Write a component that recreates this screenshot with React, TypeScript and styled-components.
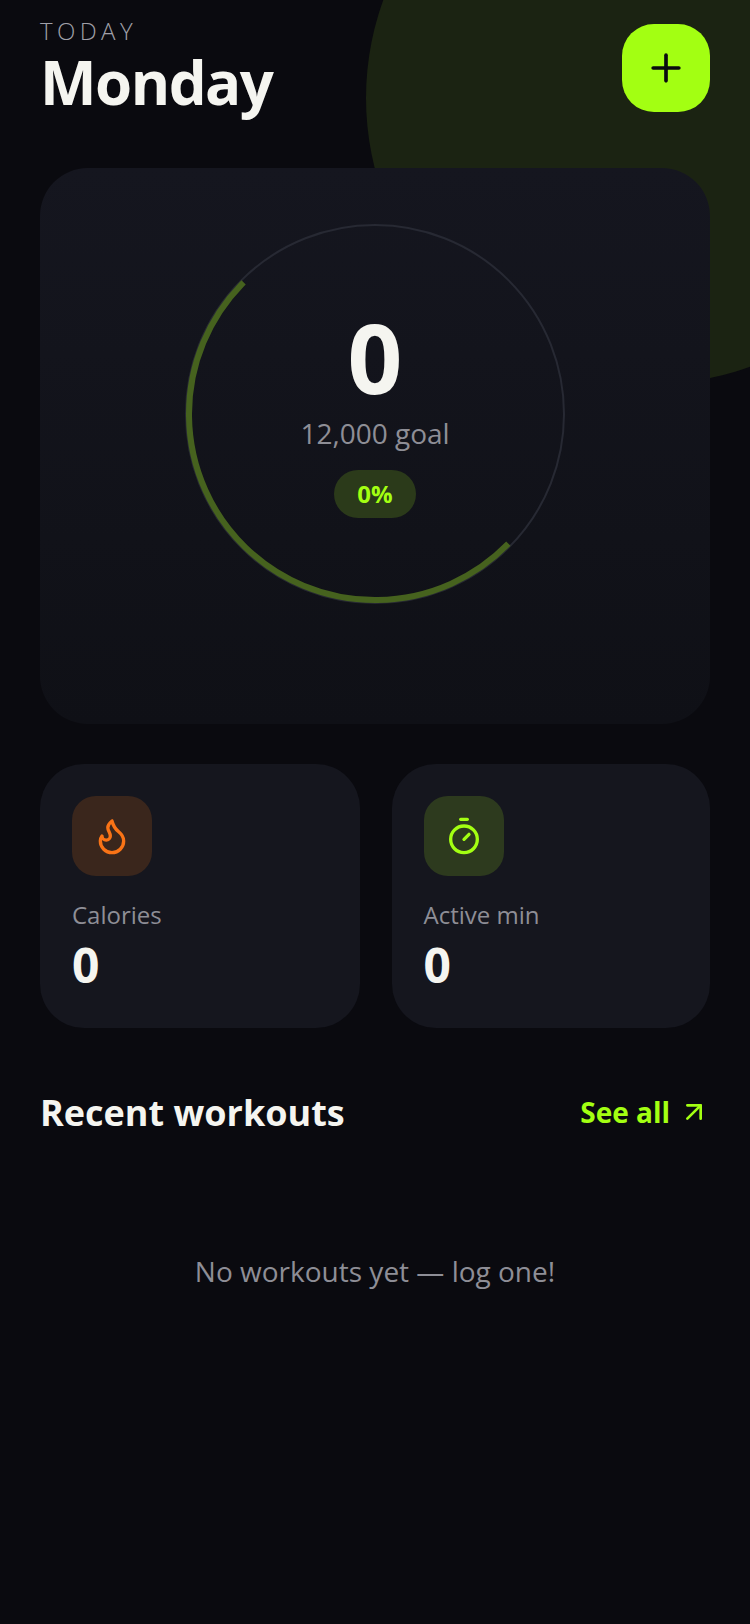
import React from "react";
import styled, { createGlobalStyle } from "styled-components";
import { ArrowUpRight, Flame, Plus, Timer } from "lucide-react";

const GlobalStyle = createGlobalStyle`
  html, body {
    margin: 0;
    padding: 0;
    background: #0a0a0f;
  }
  * {
    box-sizing: border-box;
  }
`;

const Screen = styled.div`
  position: relative;
  width: 750px;
  height: 1624px;
  overflow: hidden;
  padding: 0 40px;
  background: #0a0a0f;
  font-family: "Open Sans", sans-serif;
  color: #f5f5f0;
`;

// Decorative lime circle behind the header
const Glow = styled.div`
  position: absolute;
  top: -188px;
  left: 366px;
  width: 572px;
  height: 572px;
  border-radius: 50%;
  background: #1b2312;
`;

const Header = styled.header`
  position: relative;
  display: flex;
  justify-content: space-between;
  align-items: flex-start;
  height: 168px;
  padding-top: 16px;
`;

const Eyebrow = styled.div`
  font-size: 24px;
  line-height: 30px;
  font-weight: 300;
  letter-spacing: 4.4px;
  color: #a0a0a8;
`;

const Title = styled.h1`
  margin: 0;
  font-size: 60px;
  line-height: 72px;
  font-weight: 700;
  letter-spacing: -1.5px;
`;

const AddButton = styled.button`
  display: flex;
  align-items: center;
  justify-content: center;
  width: 88px;
  height: 88px;
  margin-top: 8px;
  padding: 0;
  border: 0;
  border-radius: 32px;
  background: #a3ff12;
  color: #0a0a0f;
`;

const HeroCard = styled.section`
  position: relative;
  display: flex;
  justify-content: center;
  height: 556px;
  padding-top: 56px;
  border-radius: 48px;
  background: linear-gradient(180deg, #15161f 0%, #0f1016 100%);
`;

const Ring = styled.div`
  position: relative;
  width: 380px;
  height: 380px;
`;

const RingSvg = styled.svg`
  display: block;
  overflow: visible;
`;

const RingCenter = styled.div`
  position: absolute;
  inset: 0;
  display: flex;
  flex-direction: column;
  align-items: center;
  padding-top: 81px;
`;

const Steps = styled.div`
  font-size: 96px;
  line-height: 104px;
  font-weight: 700;
`;

const Goal = styled.div`
  font-size: 28px;
  line-height: 36px;
  margin-top: 6px;
  color: #8e8e96;
`;

const Percent = styled.div`
  display: flex;
  align-items: center;
  justify-content: center;
  width: 82px;
  height: 48px;
  margin-top: 19px;
  padding-bottom: 2px;
  border-radius: 24px;
  background: #2b3a1a;
  color: #a3ff12;
  font-size: 24px;
  font-weight: 700;
`;

const Stats = styled.div`
  display: grid;
  grid-template-columns: 319.5px 318.5px;
  gap: 32px;
  margin-top: 40px;
`;

const StatCard = styled.div`
  height: 264px;
  padding: 32px;
  border-radius: 44px;
  background: #15161e;
`;

const StatIcon = styled.div<{ $bg: string; $color: string }>`
  display: flex;
  align-items: center;
  justify-content: center;
  width: 80px;
  height: 80px;
  border-radius: 24px;
  background: ${(props) => props.$bg};
  color: ${(props) => props.$color};
`;

const StatLabel = styled.div`
  margin-top: 22px;
  font-size: 24px;
  line-height: 34px;
  color: #8e8e96;
`;

const StatValue = styled.div`
  margin-top: 4px;
  font-size: 48px;
  line-height: 58px;
  font-weight: 700;
`;

const SectionHead = styled.div`
  display: flex;
  justify-content: space-between;
  align-items: center;
  margin-top: 56px;
  height: 56px;
`;

const SectionTitle = styled.h2`
  margin: 1px 0 0;
  font-size: 36px;
  line-height: 48px;
  font-weight: 700;
`;

const SeeAll = styled.a`
  display: flex;
  align-items: center;
  gap: 8px;
  color: #a3ff12;
  font-size: 28px;
  font-weight: 700;
`;

const Empty = styled.p`
  margin: 111px 0 0;
  text-align: center;
  font-size: 28px;
  line-height: 40px;
  color: #8e8e96;
`;

const App = () => {
  const size = 380;
  const progressRadius = 186;
  const arc = Math.PI * progressRadius + 2.6;
  const circumference = 2 * Math.PI * progressRadius;

  return (
    <Screen>
      <GlobalStyle />
      <Glow />
      <Header>
        <div>
          <Eyebrow>TODAY</Eyebrow>
          <Title>Monday</Title>
        </div>
        <AddButton aria-label="Add workout">
          <Plus size={44} strokeWidth={2} />
        </AddButton>
      </Header>

      <HeroCard>
        <Ring>
          <RingSvg width={size} height={size} viewBox="0 0 380 380">
            <circle cx="190" cy="190" r="189" fill="none" stroke="#272933" strokeWidth="2" />
            {/* half ring, from lower right round to upper left */}
            <circle
              cx="190"
              cy="190"
              r={progressRadius}
              fill="none"
              stroke="#46621e"
              strokeWidth="6"
              strokeDasharray={`${arc} ${circumference - arc}`}
              transform="rotate(44.2 190 190)"
            />
          </RingSvg>
          <RingCenter>
            <Steps>0</Steps>
            <Goal>12,000 goal</Goal>
            <Percent>0%</Percent>
          </RingCenter>
        </Ring>
      </HeroCard>

      <Stats>
        <StatCard>
          <StatIcon $bg="#3a261c" $color="#f97316">
            <Flame size={40} strokeWidth={2} />
          </StatIcon>
          <StatLabel>Calories</StatLabel>
          <StatValue>0</StatValue>
        </StatCard>
        <StatCard>
          <StatIcon $bg="#2d3a1e" $color="#a3ff12">
            <Timer size={40} strokeWidth={2} />
          </StatIcon>
          <StatLabel>Active min</StatLabel>
          <StatValue>0</StatValue>
        </StatCard>
      </Stats>

      <SectionHead>
        <SectionTitle>Recent workouts</SectionTitle>
        <SeeAll>
          See all
          <ArrowUpRight size={32} strokeWidth={2} />
        </SeeAll>
      </SectionHead>

      <Empty>No workouts yet — log one!</Empty>
    </Screen>
  );
};

export default App;
